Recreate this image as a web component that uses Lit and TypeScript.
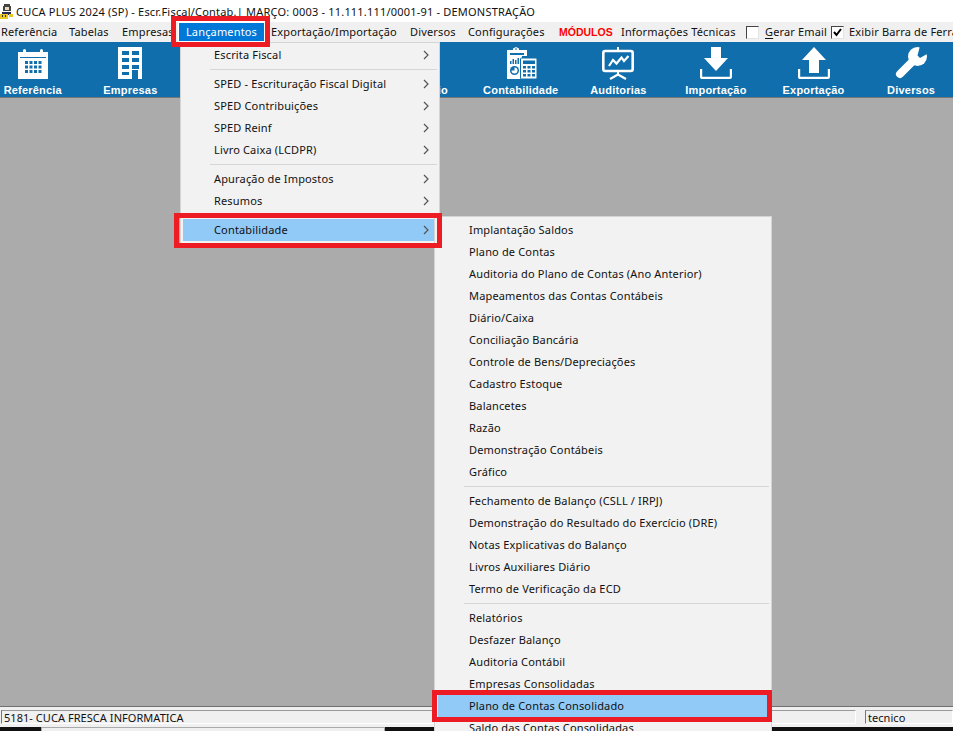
import { LitElement, html, css, svg } from "lit";
import { customElement } from "lit/decorators.js";

const chevron = html`<svg class="chev" width="6" height="10" viewBox="0 0 6 10"><path d="M1 1l4 4-4 4" fill="none" stroke="#555" stroke-width="1.2"/></svg>`;

const icons: Record<string, any> = {
  calendar: svg`<svg width="32" height="32" viewBox="0 0 32 32"><path fill="#fff" d="M1 5h5V3.500a1.500 1.500 0 0 1 3 0V5h14V3.500a1.500 1.500 0 0 1 3 0V5h5v27H1z"/><path fill="#106eac" d="M3 10h26v1H3z"/><g fill="#106eac"><path d="M8 14h3v3H8zM12.500 14h3v3h-3zM17 14h3v3h-3zM21.500 14h3v3h-3zM8 18.500h3v3H8zM12.500 18.500h3v3h-3zM17 18.500h3v3h-3zM21.500 18.500h3v3h-3zM8 23h3v3H8zM12.500 23h3v3h-3zM17 23h3v3h-3zM21.500 23h3v3h-3z"/></g></svg>`,
  building: svg`<svg width="32" height="32" viewBox="0 0 32 32"><path fill="#fff" d="M4 0h24v32H4z"/><g fill="#106eac"><path d="M8 4h7v4H8zM18 4h7v4h-7zM8 11h7v4H8zM18 11h7v4h-7zM8 18h7v4H8zM18 18h7v4h-7zM8 25h7v3H8zM18 23h6v9h-6z"/></g></svg>`,
  ledger: svg`<svg width="32" height="32" viewBox="0 0 32 32"><path fill="#fff" d="M2 3h6V1.500L11 0l3 1.500V3h8v6h-5v4h-1v19H2z"/><path fill="#106eac" d="M5 6h14v2H5zM10 1.500h2v1h-2z"/><path fill="#106eac" d="M5 14h1.500v3H5zM7.500 12h1.500v5H7.500zM10 13h1.500v4H10zM12.500 11h1.500v6H12.500z"/><circle cx="9.500" cy="23.500" r="4.500" fill="#106eac"/><path fill="#fff" d="M9.500 20.500a3 3 0 1 1-3 3h3z"/><rect x="15.500" y="11" width="16.500" height="21" rx="1" fill="#fff" stroke="#106eac"/><path fill="#106eac" d="M18 13.500h12v3.500H18zM18 19h3v2.500h-3zM22.500 19h3v2.500h-3zM27 19h3v2.500h-3zM18 23h3v2.500h-3zM22.500 23h3v2.500h-3zM27 23h3v2.500h-3zM18 27h3v2.500h-3zM22.500 27h3v2.500h-3zM27 27h3v2.500h-3z"/></svg>`,
  board: svg`<svg width="32" height="33" viewBox="0 0 32 33"><rect x="1.300" y="4" width="29.400" height="20" rx="2" fill="none" stroke="#fff" stroke-width="2.600"/><path fill="none" stroke="#fff" stroke-width="2.200" d="M7 19l4-6 3.500 3.500 5-6 2.500 3.500 4.500-5"/><path fill="none" stroke="#fff" stroke-width="2.200" d="M8 32l8-4.500 8 4.500"/><path fill="#fff" d="M15 0h2v4h-2zM15 24h2v4h-2z"/></svg>`,
  down: svg`<svg width="32" height="32" viewBox="0 0 32 32"><path fill="#fff" d="M11 0h10v11h7L16 24 4 11h7z"/><path fill="none" stroke="#fff" stroke-width="2.200" d="M1.100 22v8a.9.9 0 0 0 .9.900h28a.9.9 0 0 0 .9-.9v-8"/></svg>`,
  up: svg`<svg width="32" height="32" viewBox="0 0 32 32"><path fill="#fff" d="M11 26h10V13h7L16 0 4 13h7z"/><path fill="none" stroke="#fff" stroke-width="2.200" d="M1.100 22v8a.9.9 0 0 0 .9.900h28a.9.9 0 0 0 .9-.9v-8"/></svg>`,
  wrench: svg`<svg width="32" height="32" viewBox="0 0 32 32"><path d="M5 27L19 13" stroke="#fff" stroke-width="8" stroke-linecap="round"/><circle cx="22.500" cy="9.500" r="9.500" fill="#fff"/><path fill="#106eac" d="M22.500 8.500L25 -1H34V6L25 11z"/></svg>`,
};

const bar: [string, number, string?][] = [
  ["Referência", 68], ["Tabelas", 53], ["Empresas", 56],
  ["Lançamentos", 87, "on"], ["Exportação/Importação", 139], ["Diversos", 58], ["Configurações", 91],
  ["MÓDULOS", 62, "red"], ["Informações Técnicas", 125],
];

const tools: [string, string?][] = [
  ["Referência", "calendar"], ["Empresas", "building"], [""], [""], ["Relatório"],
  ["Contabilidade", "ledger"], ["Auditorias", "board"], ["Importação", "down"], ["Exportação", "up"], ["Diversos", "wrench"],
];

const m1: (string | null)[] = ["Escrita Fiscal", null, "SPED - Escrituração Fiscal Digital", "SPED Contribuições", "SPED Reinf", "Livro Caixa (LCDPR)", null, "Apuração de Impostos", "Resumos", null, "Contabilidade"];
const m2: (string | null)[] = ["Implantação Saldos", "Plano de Contas", "Auditoria do Plano de Contas (Ano Anterior)", "Mapeamentos das Contas Contábeis", "Diário/Caixa", "Conciliação Bancária", "Controle de Bens/Depreciações", "Cadastro Estoque", "Balancetes", "Razão", "Demonstração Contábeis", "Gráfico", null,
  "Fechamento de Balanço (CSLL / IRPJ)", "Demonstração do Resultado do Exercício (DRE)", "Notas Explicativas do Balanço", "Livros Auxiliares Diário", "Termo de Verificação da ECD", null,
  "Relatórios", "Desfazer Balanço", "Auditoria Contábil", "Empresas Consolidadas", "Plano de Contas Consolidado", "Saldo das Contas Consolidadas"];

@customElement("app-root")
export class AppRoot extends LitElement {
  static styles = css`
    :host { display: block; position: relative; width: 953px; height: 731px; overflow: hidden; background: #ababab;
      font: 11px/1 "Noto Sans", sans-serif; letter-spacing: .16px; color: #111; }
    .page { display: flex; flex-direction: column; height: 731px; }
    .title { height: 22px; background: #fff; display: flex; align-items: center; gap: 1px; flex: none; letter-spacing: .2px; }
    .bar { height: 20px; background: #f0f0f0; display: flex; align-items: center; flex: none; white-space: nowrap; overflow: hidden; padding: 0 0 1px 1px; box-sizing: border-box; }
    .bi { flex: none; }
    .bi.on { box-sizing: border-box; height: 20px; margin-top: 1px; margin-right: 6px; background: #0078d7; outline: 1px solid #fff; outline-offset: -1px; color: #fff; text-align: center; line-height: 19px; }
    .bi.red { color: #f00; font: bold 10.500px "Liberation Sans", sans-serif; letter-spacing: 0; }
    .check { flex: none; width: 11px; height: 11px; border: 1px solid; border-color: #444 #e4e4e4 #e4e4e4 #444; background: #fff; margin-top: 1px; margin-right: 6px; display: flex; }
    .lbl { flex: none; }
    .lbl + .check { margin-right: 5px; }
    .lbl u { text-underline-offset: 2px; }
    .tools { height: 55px; margin-left: -16px; background: #106eac; display: grid; grid-template-columns: repeat(10, 97.6px); flex: none; border-bottom: 1px solid #777; box-sizing: content-box; }
    .tool { display: flex; flex-direction: column; align-items: center; color: #fff; font: bold 11px "Liberation Sans", sans-serif; letter-spacing: .2px; white-space: nowrap; }
    .ico { height: 33px; margin-top: 5px; }
    .tl { margin-top: 4px; }
    .main { flex: 1; }
    .status { height: 20px; flex: none; background: #f0f0f0; border-top: 1px solid #6f6f6f; display: flex; align-items: center; padding: 0 0 0 1px; gap: 9px; }
    .field { box-sizing: border-box; height: 14px; border-left: 1px solid #777; border-top: 1px solid #999; border-right: 1px solid #fff; border-bottom: 1px solid #fff; line-height: 13px; padding-left: 2px; letter-spacing: .05px; white-space: nowrap; }
    .f1 { width: 855px; }
    .f2 { flex: 1; }
    .strip { height: 4px; flex: none; background: #111; display: flex; }
    .strip i { display: block; width: 344px; margin-left: 41px; background: #f0f0f0; border: 1px solid #aaa; border-bottom: 0; box-sizing: border-box; }
    .menu { position: absolute; background: #f2f2f2; box-sizing: border-box; border: 1px solid #d4d4d4; }
    .m1 { left: 180px; top: 42px; width: 260px; height: 204px; padding-top: 1px; }
    .m2 { left: 434px; top: 216px; width: 338px; height: 530px; padding-top: 2px; }
    .row { height: 22px; display: flex; align-items: center; justify-content: space-between; margin: 0 3px 0 2px; padding-left: 31px; padding-right: 7px; white-space: nowrap; }
    .row span { margin-bottom: 2px; }
    .m2 .row { margin-left: 3px; margin-right: 4px; padding-left: 31px; }
    .row.sel { background: #91c9f7; }
    .sep { height: 7px; display: flex; align-items: center; margin-left: 29px; margin-right: 2px; }
    .sep::after { content: ""; display: block; height: 1px; flex: 1; background: #d6d6d6; }
    .box { position: absolute; box-sizing: border-box; border: 5px solid #ed1c24; }
    .b1 { left: 171px; top: 16px; width: 99px; height: 31px; }
    .b2 { left: 174px; top: 213px; width: 268px; height: 35px; }
    .b3 { left: 432px; top: 690px; width: 340px; height: 32px; }
  `;

  private rows(items: (string | null)[], sel: string, arrows: boolean) {
    return items.map((t) =>
      t === null
        ? html`<div class="sep"></div>`
        : html`<div class="row ${t === sel ? "sel" : ""}"><span>${t}</span>${arrows ? chevron : ""}</div>`
    );
  }

  render() {
    return html`
      <div class="page">
        <div class="title">
          <svg width="15" height="15" viewBox="0 0 15 15" style="flex:none">
            <path fill="#444" d="M4 0h6v2h1v5H3V2h1z"/><path fill="#e8dcc0" d="M5 3h4v3H5z"/>
            <path fill="#2a2a50" d="M2 8h9v3H2z"/><path fill="#e8c820" d="M0 10h8v5H0zM9 10h4v3H9z"/><path fill="#333" d="M2 11h1v2H2zM5 11h1v2H5z"/>
          </svg>
          <span>CUCA PLUS 2024 (SP) - Escr.Fiscal/Contab.| MARÇO: 0003 - 11.111.111/0001-91 - DEMONSTRAÇÃO</span>
        </div>
        <div class="bar">
          ${bar.map(([t, w, c]) => html`<span class="bi ${c ?? ""}" style="width:${w}px">${t}</span>`)}
          <span class="check"></span>
          <span class="lbl" style="width:66px"><u>G</u>erar Email</span>
          <span class="check"><svg width="11" height="11" viewBox="0 0 11 11"><path d="M2 5l2.500 3L9 2" fill="none" stroke="#000" stroke-width="2"/></svg></span>
          <span class="lbl">Exibir Barra de Ferramentas</span>
        </div>
        <div class="tools">
          ${tools.map(([t, i]) => html`<div class="tool"><div class="ico">${i ? icons[i] : ""}</div><div class="tl">${t}</div></div>`)}
        </div>
        <div class="main"></div>
        <div class="status">
          <div class="field f1">5181- CUCA FRESCA INFORMATICA</div>
          <div class="field f2">tecnico</div>
        </div>
        <div class="strip"><i></i></div>
      </div>
      <div class="menu m1">${this.rows(m1, "Contabilidade", true)}</div>
      <div class="menu m2">${this.rows(m2, "Plano de Contas Consolidado", false)}</div>
      <div class="box b1"></div><div class="box b2"></div><div class="box b3"></div>
    `;
  }
}
